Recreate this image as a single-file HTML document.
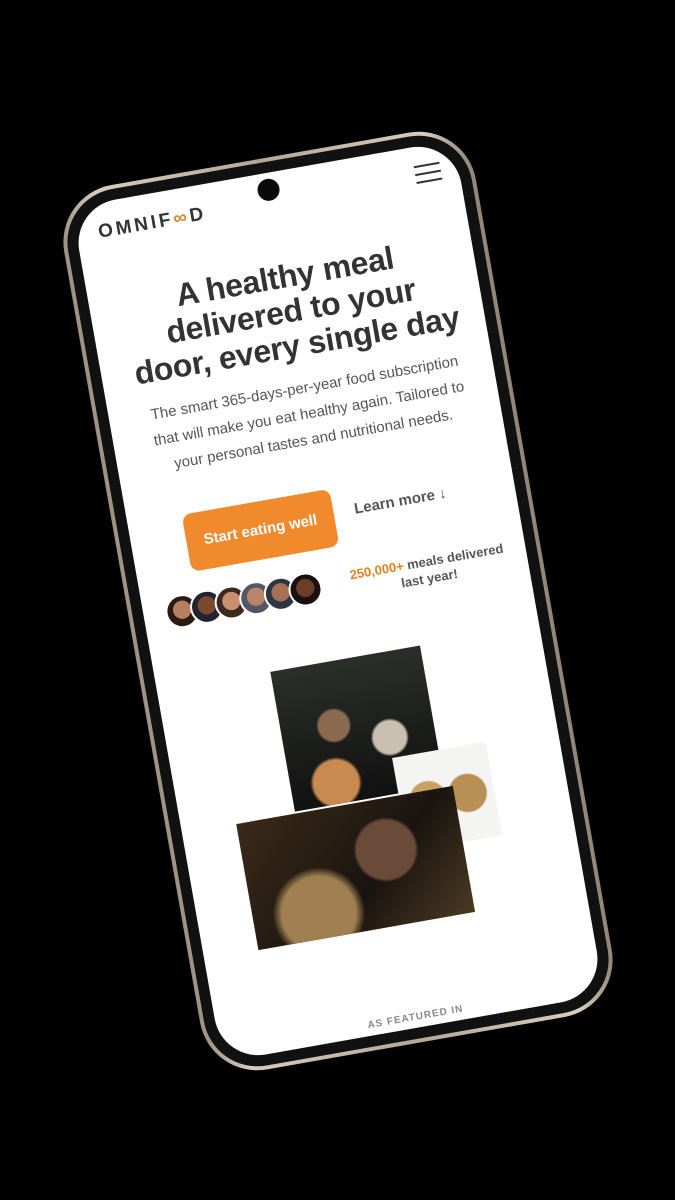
<!DOCTYPE html>
<html><head><meta charset="utf-8"><style>
html,body{margin:0;padding:0;background:#000;width:675px;height:1200px;overflow:hidden;font-family:"Liberation Sans",sans-serif}
.phone{position:absolute;left:129px;top:152px;width:418px;height:898px;transform:rotate(-10deg);border-radius:58px;background:linear-gradient(90deg,#9c9080,#d8cdbd 10%,#b4a794 50%,#d8cdbd 90%,#8f8474);}
.inner{position:absolute;left:4px;top:4px;right:4px;bottom:4px;border-radius:54px;background:#111;}
.screen{position:absolute;left:11px;top:11px;right:11px;bottom:11px;border-radius:44px;background:#fff;overflow:hidden}
.abs{position:absolute}
.cam{left:186px;top:6px;width:22px;height:22px;border-radius:50%;background:#0a0a0a}
.logo{left:22px;top:19px;font-size:19px;letter-spacing:3px;color:#333;font-weight:bold}
.ham{left:344px;top:19px;width:26px}
.ham div{height:2px;background:#333;margin-bottom:6px}
h1{position:absolute;left:0;width:396px;top:88px;margin:0;text-align:center;font-size:32px;line-height:35px;color:#333;font-weight:bold;letter-spacing:-0.3px}
.p{left:0;width:396px;top:206px;text-align:center;font-size:15px;line-height:26px;color:#555}
.btn{left:55px;top:322px;width:150px;height:58px;border-radius:9px;background:#f08a2c;color:#fff;font-weight:bold;font-size:15px;text-align:center;line-height:58px}
.lm{left:226px;top:338px;font-size:15px;font-weight:bold;color:#555}
.av{top:400px;width:30px;height:30px;border-radius:50%;border:2px solid #fff}
.meals{left:208px;top:402px;width:160px;text-align:center;font-size:13px;font-weight:bold;color:#555;line-height:17px}
.meals b{color:#e67e22}
.f{left:0;width:396px;top:852px;text-align:center;font-size:10px;letter-spacing:1px;color:#888;font-weight:bold}
</style></head><body>
<div class="phone"><div class="inner"><div class="screen">
<div class="abs cam"></div>
<div class="abs logo">OMNIF<span style="color:#e67e22">∞</span>D</div>
<div class="abs ham"><div></div><div></div><div></div></div>
<h1>A healthy meal<br>delivered to your<br>door, every single day</h1>
<div class="abs p">The smart 365-days-per-year food subscription<br>that will make you eat healthy again. Tailored to<br>your personal tastes and nutritional needs.</div>
<div class="abs btn">Start eating well</div>
<div class="abs lm">Learn more ↓</div>
<div class="abs av" style="left:22px;background:radial-gradient(circle at 50% 45%,#b88060 40%,#2a1a14 42%)"></div>
<div class="abs av" style="left:47px;background:radial-gradient(circle at 50% 45%,#7a4a30 40%,#223 42%)"></div>
<div class="abs av" style="left:72px;background:radial-gradient(circle at 50% 45%,#c99070 40%,#3a2a20 42%)"></div>
<div class="abs av" style="left:97px;background:radial-gradient(circle at 50% 45%,#b98568 40%,#556 42%)"></div>
<div class="abs av" style="left:122px;background:radial-gradient(circle at 50% 45%,#a77055 40%,#2f3540 42%)"></div>
<div class="abs av" style="left:147px;background:radial-gradient(circle at 50% 45%,#6a3e28 40%,#1a1010 42%)"></div>
<div class="abs meals"><b>250,000+</b> meals delivered<br>last year!</div>
<div class="abs" style="left:115px;top:492px;width:152px;height:142px;background:radial-gradient(circle at 35% 45%,#8a6a50 12%,transparent 14%),radial-gradient(circle at 70% 60%,#c9c0b0 12%,transparent 14%),radial-gradient(circle at 30% 85%,#c98a50 14%,transparent 16%),linear-gradient(#2b2f2a,#111)"></div>
<div class="abs" style="left:220px;top:598px;width:95px;height:95px;background:radial-gradient(circle at 30% 50%,#c9a060 22%,transparent 24%),radial-gradient(circle at 72% 50%,#b89055 22%,transparent 24%),#f4f4f2"></div>
<div class="abs" style="left:55px;top:636px;width:220px;height:128px;background:radial-gradient(circle at 65% 40%,#6a4a38 18%,transparent 20%),radial-gradient(circle at 30% 80%,#a08050 20%,transparent 25%),linear-gradient(135deg,#3a2a18,#1a1410 60%,#4a3a22)"></div>
<div class="abs f">AS FEATURED IN</div>
</div></div></div>
</body></html>
